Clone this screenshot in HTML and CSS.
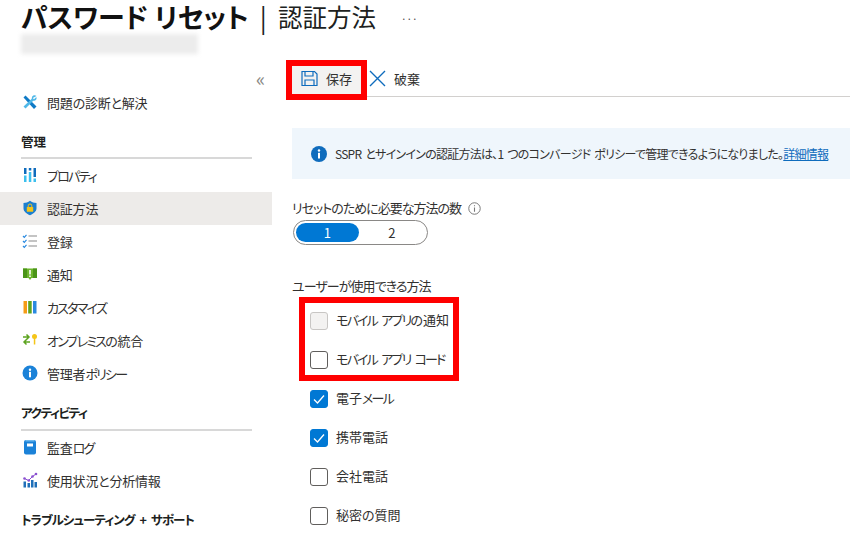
FILE: index.html
```
<!DOCTYPE html>
<html lang="ja">
<head>
<meta charset="utf-8">
<title>パスワード リセット | 認証方法</title>
<link rel="stylesheet" href="styles.css">
</head>
<body>
<div class="page">
  <header class="head">
    <h1 class="title"><b>パスワード リセット</b><span class="sep">|</span><span class="sub">認証方法</span><span class="more">···</span></h1>
    <div class="blur"></div>
  </header>
  <div class="main">
    <nav class="side">
      <div class="collapse">«</div>
      <a class="item">
        <svg class="ic" viewBox="0 0 16 16"><path d="M1.500 3.500 3.500 1.500 14.500 12.500 12 15Z" fill="#0f7ac6"/><path d="M14.500 2c-1.500-1.200-3.800-.8-4.500 1-.3 1 0 1.500-.5 2L1.500 12.500 3.500 14.500l7.500-7.500c.5-.5 1.200-.2 2-.5 1.500-.5 2-2.200 1.300-3.500L12 5.200 10.800 4Z" fill="#50b8e8"/></svg>
        <span>問題の診断と解決</span>
      </a>
      <div class="group first">管理</div>
      <a class="item">
        <svg class="ic" viewBox="0 0 16 16"><path d="M2 1h2.500v6H2ZM6.800 1h2.500v2.500H6.800ZM11.500 1H14v9h-2.500Z" fill="#0f6cbd"/><path d="M2 8.500h2.500V15H2ZM6.800 5H9.300v10H6.800ZM11.500 11.500H14V15h-2.500Z" fill="#3cc0ee"/></svg>
        <span><span class="k">プロパティ</span></span>
      </a>
      <a class="item active">
        <svg class="ic" viewBox="0 0 16 16"><path d="M8 .8c2 1.500 4 2.200 6.500 2.200v5.500c0 3-3.300 5.500-6.500 6.700-3.200-1.200-6.500-3.700-6.500-6.700V3C4 3 6 2.300 8 .8Z" fill="#1b7fd0"/><rect x="4.800" y="7" width="6.400" height="4.800" rx=".5" fill="#f5c518"/><path d="M6.200 7V5.800a1.800 1.800 0 0 1 3.600 0V7" fill="none" stroke="#f5c518" stroke-width="1"/></svg>
        <span>認証方法</span>
      </a>
      <a class="item">
        <svg class="ic" viewBox="0 0 16 16"><path d="M1 3l1.300 1.300L4.500 1.800M1 8l1.300 1.300L4.500 6.800M1 13l1.300 1.300 2.200-2.500" fill="none" stroke="#2a8ae0" stroke-width="1.200"/><path d="M6.500 3H15M6.500 8H15M6.500 13H15" stroke="#8a8a8a" stroke-width="1.200"/></svg>
        <span>登録</span>
      </a>
      <a class="item">
        <svg class="ic" viewBox="0 0 16 16"><path d="M1 2.500h14v9.500H9.500L8 14l-1.500-2H1Z" fill="#6cb52c"/><path d="M1 2.500h4v9.500H1ZM11 2.500h4v9.500h-4Z" fill="#4a9418"/><path d="M7.200 4h1.600v4.500H7.200ZM7.200 9.500h1.600v1.500H7.200Z" fill="#fff"/></svg>
        <span>通知</span>
      </a>
      <a class="item">
        <svg class="ic" viewBox="0 0 16 16"><rect x="1.500" y="2" width="3.500" height="12.500" fill="#f59c16"/><rect x="6.200" y="2" width="3.500" height="12.500" fill="#5da420"/><rect x="11" y="2" width="3.500" height="12.500" fill="#2a8ae0"/></svg>
        <span><span class="k">カスタマイズ</span></span>
      </a>
      <a class="item">
        <svg class="ic" viewBox="0 0 16 16"><path d="M1 5h6M4.500 2.500 7 5 4.500 7.500M8 10H2M4.500 7.500 2 10l2.500 2.500" fill="none" stroke="#5da420" stroke-width="1.500"/><circle cx="12.500" cy="4.500" r="2.500" fill="#f5c518"/><rect x="11.800" y="5.500" width="1.500" height="7" fill="#f5c518"/></svg>
        <span><span class="k">オンプレミス</span>の統合</span>
      </a>
      <a class="item">
        <svg class="ic" viewBox="0 0 16 16"><circle cx="8" cy="8" r="7.500" fill="#1b82d8"/><rect x="7" y="6.800" width="2" height="5.500" fill="#fff"/><circle cx="8" cy="4.800" r="1.200" fill="#fff"/></svg>
        <span>管理者<span class="k">ポリシー</span></span>
      </a>
      <div class="group second"><span class="k">アクティビティ</span></div>
      <a class="item">
        <svg class="ic" viewBox="0 0 16 16"><rect x="2" y="1" width="12" height="14.500" rx="2" fill="#1b82d8"/><path d="M3.500 1h9v1.500h-9Z" fill="#6cb8ee"/><rect x="5" y="4.500" width="6" height="3" fill="#fff"/></svg>
        <span>監査<span class="k">ログ</span></span>
      </a>
      <a class="item">
        <svg class="ic" viewBox="0 0 16 16"><path d="M1.500 9.500h2.500V15.500H1.500ZM5.500 11h2.500v4.500H5.500ZM9 8h2.500v7.500H9ZM12.500 10h2.500v5.500H12.500Z" fill="#1f6fb8"/><path d="M2.500 6.500 6.500 8.500 10.500 4.500 14 2" fill="none" stroke="#8a4fd0" stroke-width="1"/><circle cx="2.500" cy="6.500" r="1.300" fill="#8a4fd0"/><circle cx="6.800" cy="8.500" r="1.300" fill="#8a4fd0"/><circle cx="10.500" cy="4.500" r="1.300" fill="#8a4fd0"/><circle cx="14" cy="2" r="1.300" fill="#8a4fd0"/></svg>
        <span>使用状況と分析情報</span>
      </a>
      <div class="group plain"><span class="tight">トラブルシューティング + サポート</span></div>
    </nav>
    <main class="content">
      <div class="toolbar">
        <button class="tool save">
          <svg class="tool-ic" viewBox="0 0 17 17"><path d="M1 1.500h12.500L16 4v11.500H1Z" fill="none" stroke="#0f6cbd" stroke-width="1.200"/><path d="M4 1.500v4.500h8V1.500M4 15.500V10h9v5.500" fill="none" stroke="#0f6cbd" stroke-width="1.200"/></svg>
          <span>保存</span>
        </button>
        <button class="tool discard">
          <svg class="tool-ic" viewBox="0 0 17 17"><path d="M1 1l15 15M16 1 1 16" stroke="#0f6cbd" stroke-width="1.400" fill="none"/></svg>
          <span>破棄</span>
        </button>
      </div>
      <div class="banner">
        <svg class="banner-ic" viewBox="0 0 16 16"><circle cx="8" cy="8" r="8" fill="#0f6cbd"/><rect x="7" y="6.800" width="2" height="5.700" fill="#fff"/><circle cx="8" cy="4.500" r="1.200" fill="#fff"/></svg>
        <span>SSPR とサインインの認証方法は、1 つのコンバージド ポリシーで管理できるようになりました。<a class="link">詳細情報</a></span>
      </div>
      <div class="label need">リセットのために必要な方法の数
        <svg class="hint" viewBox="0 0 12 12"><circle cx="6" cy="6" r="5.300" fill="none" stroke="#777" stroke-width=".9"/><path d="M6 5v4M6 3v1" stroke="#777" stroke-width="1"/></svg>
      </div>
      <div class="toggle"><span class="opt on">1</span><span class="opt">2</span></div>
      <div class="label methods">ユーザーが使用できる方法</div>
      <div class="highlight">
        <label class="check"><span class="box disabled"></span><span class="txt"><span class="k">モバイル アプリ</span>の通知</span></label>
        <label class="check"><span class="box"></span><span class="txt"><span class="kk">モバイル アプリ コード</span></span></label>
      </div>
      <div class="rest">
        <label class="check"><span class="box checked"><svg viewBox="0 0 18 18"><path d="M4 9.500 7.500 13 14 5.500" fill="none" stroke="#fff" stroke-width="1.300"/></svg></span><span class="txt">電子<span class="k">メール</span></span></label>
        <label class="check"><span class="box checked"><svg viewBox="0 0 18 18"><path d="M4 9.500 7.500 13 14 5.500" fill="none" stroke="#fff" stroke-width="1.300"/></svg></span><span class="txt">携帯電話</span></label>
        <label class="check"><span class="box"></span><span class="txt">会社電話</span></label>
        <label class="check"><span class="box"></span><span class="txt">秘密の質問</span></label>
      </div>
    </main>
  </div>
</div>
</body>
</html>
```
FILE: styles.css
```
* { box-sizing: border-box; }
html, body { margin: 0; padding: 0; }
body {
  width: 850px;
  height: 537px;
  overflow: hidden;
  background: #fff;
  color: #323130;
  font-family: "Noto Sans CJK JP", "Noto Sans", sans-serif;
  font-size: 13px;
  font-feature-settings: "palt";
}
.k { letter-spacing: -1.8px; word-spacing: 3px; }
.kk { letter-spacing: -1.8px; word-spacing: 3px; }
.tight { letter-spacing: -.95px; word-spacing: 3px; }
.page { display: flex; flex-direction: column; height: 537px; overflow: hidden; }
.head { height: 60px; padding-left: 21px; flex: none; }
.title {
  margin: 0;
  height: 34px;
  display: flex;
  align-items: center;
  font-size: 27px;
  font-weight: 400;
  line-height: 34px;
  color: #201f1e;
  white-space: nowrap;
}
.title b { font-weight: 700; color: #111; }
.sep { margin: 0 11px; font-size: 26px; }
.sub { font-size: 24.5px; }
.more { margin-left: 25px; font-size: 10px; color: #444; padding-top: 3px; }
.blur { width: 177px; height: 20px; background: #ececec; filter: blur(2px); }
.main { display: flex; flex: 1; min-height: 0; }
.side { width: 272px; flex: none; display: flex; flex-direction: column; }
.collapse { height: 26px; flex: none; padding-right: 7px; text-align: right; font-size: 19px; line-height: 36px; color: #8a8886; }
.item { height: 33px; flex: none; display: flex; align-items: center; padding: 0 0 1px 22px; gap: 9px; color: #323130; white-space: nowrap; letter-spacing: -.2px; }
.item.active { background: #edebe9; }
.ic { width: 16px; height: 16px; flex: none; }
.group {
  flex: none;
  margin: 0 20px 0 21px;
  line-height: 20px;
  font-weight: 700;
  font-size: 12.5px;
  color: #201f1e;
  white-space: nowrap;
}
.first { height: 40px; padding-top: 13px; border-bottom: 2px solid #d8d8d8; }
.second { height: 41px; padding-top: 13px; border-bottom: 2px solid #d8d8d8; }
.second .k { letter-spacing: -1.4px; }
.plain { padding-top: 13px; }
.content { flex: 1; min-width: 0; padding-left: 20px; }
.toolbar { height: 37px; display: flex; align-items: flex-start; border-bottom: 1px solid #d2d0ce; padding-top: 6px; margin-bottom: 31px; }
.tool { display: flex; align-items: center; height: 28px; border: 0; padding: 0 0 3px; background: none; font: inherit; color: #323130; font-feature-settings: "palt"; }
.save { width: 69px; padding-left: 9px; gap: 8px; background: #f3f2f1; outline: 6px solid #f00; }
.discard { margin-left: 8px; gap: 8px; }
.tool-ic { width: 17px; height: 17px; flex: none; }
.banner { height: 51px; display: flex; align-items: center; gap: 8px; padding-left: 19px; background: #eff6fc; font-size: 12px; white-space: nowrap; letter-spacing: -.75px; word-spacing: 2px; }
.banner-ic { width: 16px; height: 16px; flex: none; }
.link { color: #0f6cbd; text-decoration: underline; }
.label { margin-top: 19px; height: 20px; line-height: 20px; display: flex; align-items: center; gap: 7px; }
.need { letter-spacing: -1px; }
.hint { width: 13px; height: 13px; }
.toggle { margin: 2px 0 0 1px; width: 135px; height: 25px; border: 1px solid #8a8886; border-radius: 13px; padding: 2px; display: flex; }
.opt { width: 63px; display: flex; align-items: center; justify-content: center; border-radius: 10px; font-size: 13px; }
.opt + .opt { width: 67px; }
.opt.on { background: #0078d4; color: #fff; }
.label.methods { margin-top: 31px; letter-spacing: -.95px; }
.highlight { margin: 1px 0 0 7px; width: 160px; height: 84px; border: 6px solid #f00; padding-top: 9px; display: flex; flex-direction: column; gap: 21px; }
.rest { padding: 9px 0 0 18px; display: flex; flex-direction: column; gap: 21px; }
.check { display: flex; align-items: flex-start; gap: 8px; height: 18px; white-space: nowrap; color: #323130; }
.txt { line-height: 15px; }
.highlight .check { margin-left: 5px; }
.box { width: 18px; height: 18px; flex: none; border: 1px solid #605e5c; border-radius: 3px; background: #fff; display: block; }
.box svg { display: block; width: 18px; height: 18px; margin: -1px; }
.box.disabled { background: #f3f2f1; border-color: #c8c6c4; }
.box.checked { background: #0078d4; border-color: #0078d4; }
```
